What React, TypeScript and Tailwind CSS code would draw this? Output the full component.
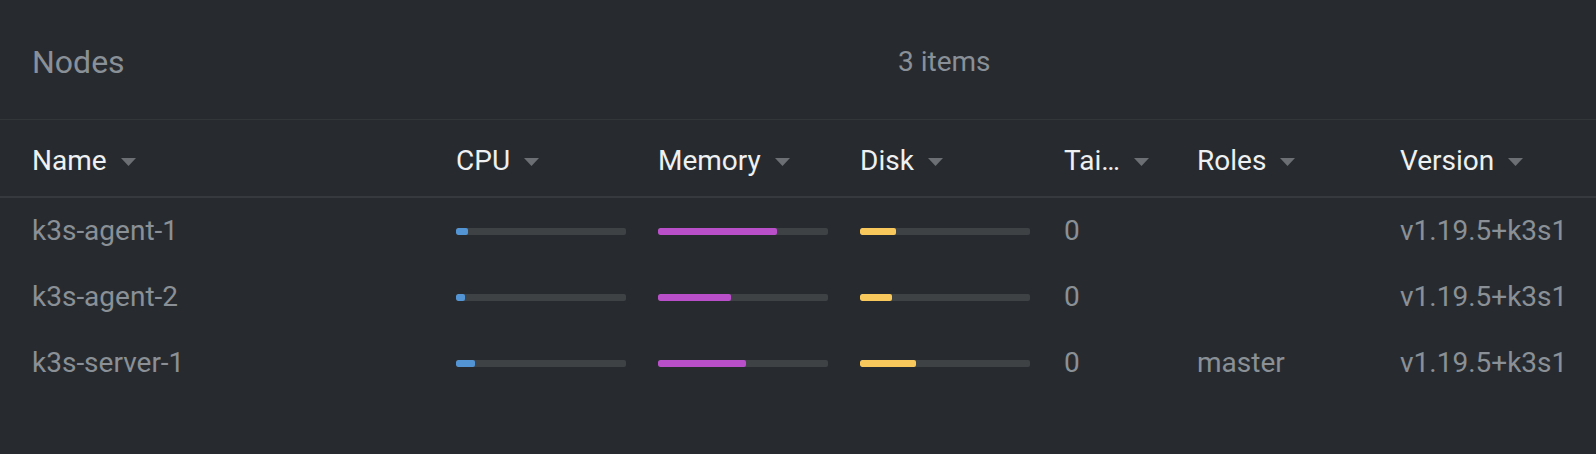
import { type ReactNode } from 'react'

type Node = {
  name: string
  cpu: number
  mem: number
  disk: number
  taints: number
  roles: string
  version: string
}

const NODES: Node[] = [
  { name: 'k3s-agent-1', cpu: 7, mem: 70, disk: 21, taints: 0, roles: '', version: 'v1.19.5+k3s1' },
  { name: 'k3s-agent-2', cpu: 5, mem: 43, disk: 19, taints: 0, roles: '', version: 'v1.19.5+k3s1' },
  { name: 'k3s-server-1', cpu: 11, mem: 52, disk: 33, taints: 0, roles: 'master', version: 'v1.19.5+k3s1' },
]

const COLS = 'grid grid-cols-[424px_202px_202px_204px_133px_203px_1fr] pl-8'

function SortHead({ children }: { children: ReactNode }) {
  return (
    <div className="flex items-center gap-[14px] whitespace-nowrap">
      <span>{children}</span>
      <svg width="15" height="8" viewBox="0 0 15 8" className="mt-[1px]">
        <path d="M0 0h15L7.5 8z" fill="#6c7074" />
      </svg>
    </div>
  )
}

function Bar({ value, color }: { value: number; color: string }) {
  return (
    <div className="h-[7px] w-[170px] overflow-hidden rounded-[2px] bg-[#3e4245]">
      <div className={`h-full rounded-[2px] ${color}`} style={{ width: `${value}%` }} />
    </div>
  )
}

export default function App() {
  return (
    <div
      className="h-[454px] w-full bg-[#272b2f] text-[28px]"
      style={{ fontFamily: 'Roboto, "Noto Sans", sans-serif' }}
    >
      <div className="flex h-[120px] items-center border-b border-[#323639] pl-8 pt-1">
        <h1 className="w-[866px] text-[32px] font-normal text-[#8a9097]">Nodes</h1>
        <span className="text-[#8a9097]">3 items</span>
      </div>

      <div className={`${COLS} h-[78px] items-center border-b-2 border-[#363a3e] pt-[6px] text-[#eef0f1]`}>
        <SortHead>Name</SortHead>
        <SortHead>CPU</SortHead>
        <SortHead>Memory</SortHead>
        <SortHead>Disk</SortHead>
        <SortHead>Tai…</SortHead>
        <SortHead>Roles</SortHead>
        <SortHead>Version</SortHead>
      </div>

      {NODES.map((n) => (
        <div key={n.name} className={`${COLS} h-[66px] items-center text-[#8a9096]`}>
          <div>{n.name}</div>
          <div>
            <Bar value={n.cpu} color="bg-[#5294d4]" />
          </div>
          <div>
            <Bar value={n.mem} color="bg-[#b94fc9]" />
          </div>
          <div>
            <Bar value={n.disk} color="bg-[#f8c85c]" />
          </div>
          <div>{n.taints}</div>
          <div>{n.roles}</div>
          <div className="whitespace-nowrap">{n.version}</div>
        </div>
      ))}
    </div>
  )
}
